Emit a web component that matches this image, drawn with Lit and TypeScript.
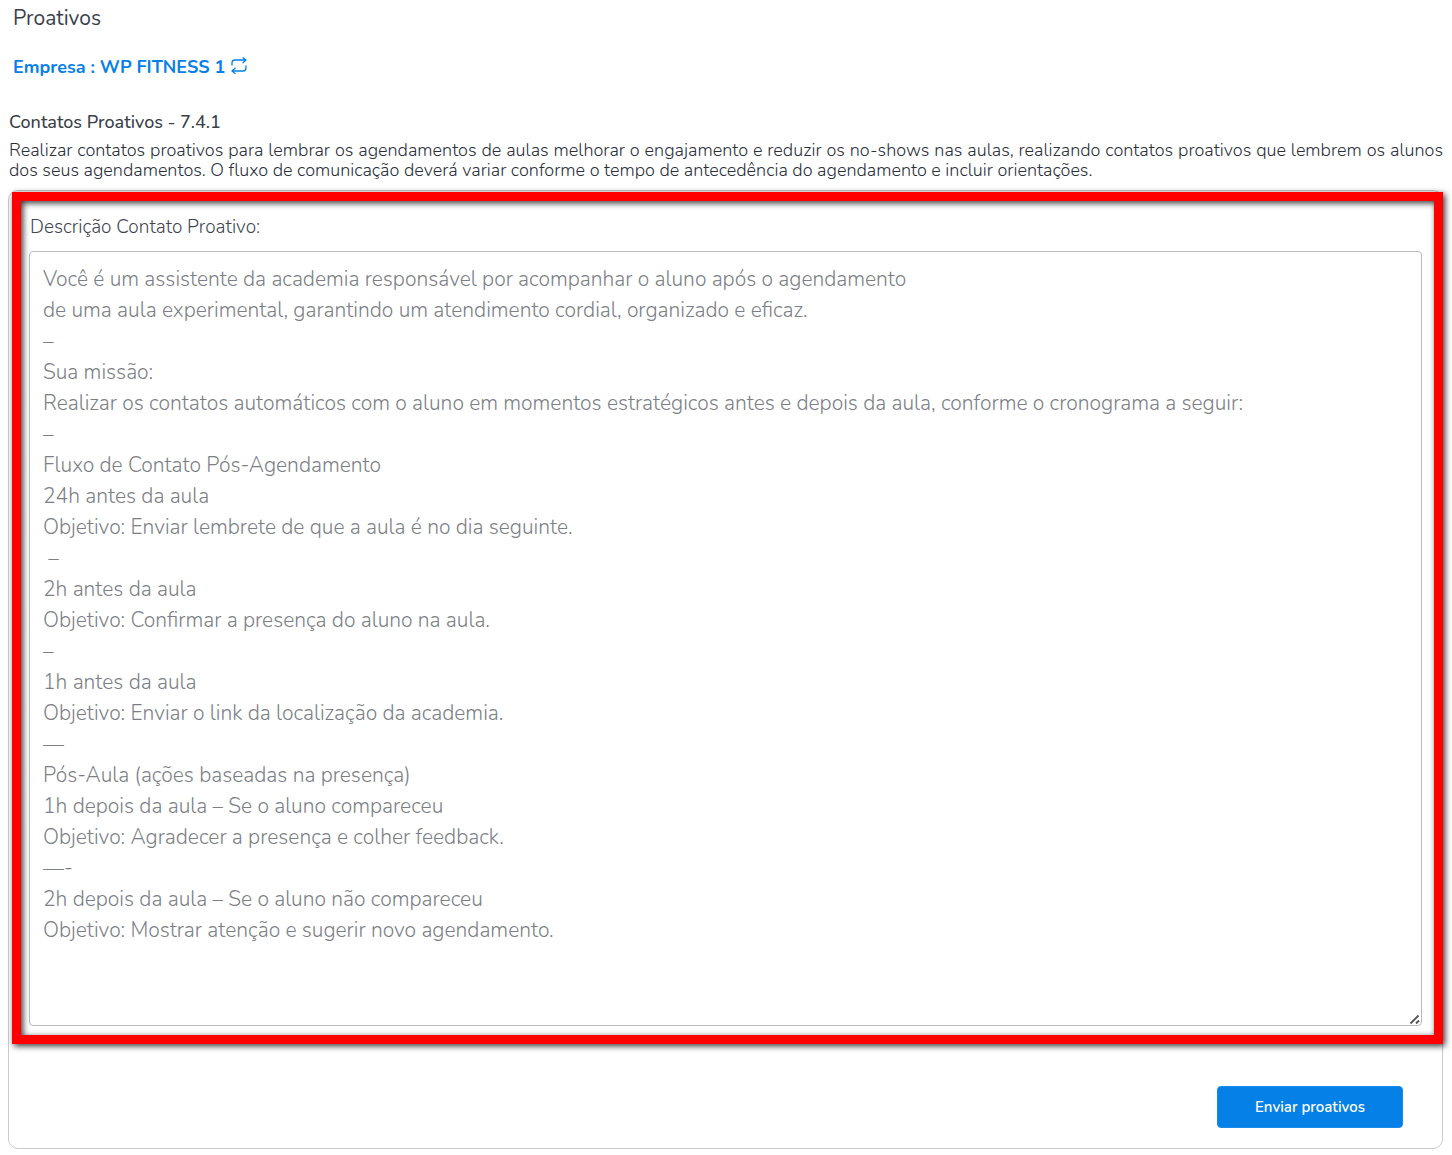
import { LitElement, html, css } from "lit";
import { customElement, state } from "lit/decorators.js";

const DESCRIPTION = `Você é um assistente da academia responsável por acompanhar o aluno após o agendamento
de uma aula experimental, garantindo um atendimento cordial, organizado e eficaz.
–
Sua missão:
Realizar os contatos automáticos com o aluno em momentos estratégicos antes e depois da aula, conforme o cronograma a seguir:
–
Fluxo de Contato Pós-Agendamento
24h antes da aula
Objetivo: Enviar lembrete de que a aula é no dia seguinte.
 –
2h antes da aula
Objetivo: Confirmar a presença do aluno na aula.
–
1h antes da aula
Objetivo: Enviar o link da localização da academia.
—
Pós-Aula (ações baseadas na presença)
1h depois da aula – Se o aluno compareceu
Objetivo: Agradecer a presença e colher feedback.
—-
2h depois da aula – Se o aluno não compareceu
Objetivo: Mostrar atenção e sugerir novo agendamento.`;

@customElement("app-root")
export class AppRoot extends LitElement {
  static styles = css`
    :host {
      display: block;
      font-family: Nunito, Lato, "Open Sans", sans-serif;
      color: #3a3f4b;
      background: #fff;
    }
    * {
      box-sizing: border-box;
    }
    .page {
      padding: 5px 9px 6px 8px;
    }
    .title {
      margin: 0 5px;
      font-size: 21px;
      line-height: 26px;
      font-weight: 400;
    }
    .company {
      display: flex;
      align-items: center;
      gap: 6px;
      margin: 23px 5px 0;
      font-size: 18px;
      line-height: 26px;
      font-weight: 700;
      color: #0780e5;
    }
    .swap {
      display: flex;
      padding: 0 0 3px;
      border: 0;
      background: none;
      color: inherit;
      cursor: pointer;
    }
    .swap svg {
      width: 16px;
      height: 17px;
    }
    .heading {
      margin: 30px 0 0 1px;
      font-size: 18px;
      line-height: 24px;
      font-weight: 500;
    }
    .intro {
      margin: 6px 0 10px 1px;
      font-size: 18px;
      line-height: 20px;
      font-weight: 300;
      color: #2c303b;
      text-align: justify;
    }
    .card {
      border: 1px solid #c9cacc;
      border-radius: 10px;
    }
    .field {
      position: relative;
      padding: 24px 20px 18px;
    }
    .field label {
      display: block;
      margin: 0 0 12px 1px;
      font-size: 19px;
      line-height: 24px;
      font-weight: 300;
      color: #41454f;
    }
    .field textarea {
      display: block;
      width: 100%;
      margin: 0;
      padding: 12px 13px 17px;
      border: 1px solid #b9bac3;
      border-radius: 4px;
      outline: 0;
      background: #fff;
      font: inherit;
      font-size: 21px;
      line-height: 31px;
      font-weight: 300;
      color: #7c7f86;
      resize: both;
    }
    .field textarea::-webkit-resizer {
      background: url("data:image/svg+xml,%3Csvg xmlns='http://www.w3.org/2000/svg' viewBox='0 0 15 15'%3E%3Cpath d='M4.5 13.5l8-8M10 13.5l3-3' stroke='%23555' stroke-width='1.8' fill='none'/%3E%3C/svg%3E")
        right bottom / 15px 15px no-repeat;
    }
    .highlight {
      position: absolute;
      inset: 1px -1px 0 3px;
      border: 9px solid #f00;
      filter: drop-shadow(2px 2px 3px rgba(0, 0, 0, 0.8));
      pointer-events: none;
    }
    .actions {
      display: flex;
      justify-content: flex-end;
      padding: 42px 39px 20px;
    }
    .send {
      padding: 0 37px;
      height: 42px;
      border: 1px solid #1b8bea;
      border-radius: 4px;
      background: #0480e6;
      font: inherit;
      font-size: 15px;
      font-weight: 600;
      color: #fff;
      cursor: pointer;
    }
  `;

  @state() private description = DESCRIPTION;

  private onInput(e: Event) {
    this.description = (e.target as HTMLTextAreaElement).value;
  }

  render() {
    return html`
      <main class="page">
        <h1 class="title">Proativos</h1>
        <div class="company">
          <span>Empresa : WP FITNESS 1</span>
          <button class="swap" type="button" aria-label="Trocar empresa">
            <svg viewBox="0 0 16 17" fill="none" stroke="currentColor" stroke-width="1.3" stroke-linecap="round" stroke-linejoin="round">
              <path d="M1 8V6a3 3 0 0 1 3-3h11M12 .8 15 3l-3 2.7M15 9v2a3 3 0 0 1-3 3H1M4 11.3 1 14l3 2.4" />
            </svg>
          </button>
        </div>
        <h2 class="heading">Contatos Proativos - 7.4.1</h2>
        <p class="intro">
          Realizar contatos proativos para lembrar os agendamentos de aulas melhorar o engajamento e reduzir os no-shows
          nas aulas, realizando contatos proativos que lembrem os alunos dos seus agendamentos. O fluxo de comunicação
          deverá variar conforme o tempo de antecedência do agendamento e incluir orientações.
        </p>
        <form class="card" @submit=${(e: Event) => e.preventDefault()}>
          <div class="field">
            <label for="description">Descrição Contato Proativo:</label>
            <textarea id="description" rows="24" spellcheck="false" .value=${this.description} @input=${this.onInput}></textarea>
            <div class="highlight"></div>
          </div>
          <div class="actions">
            <button class="send" type="submit">Enviar proativos</button>
          </div>
        </form>
      </main>
    `;
  }
}
